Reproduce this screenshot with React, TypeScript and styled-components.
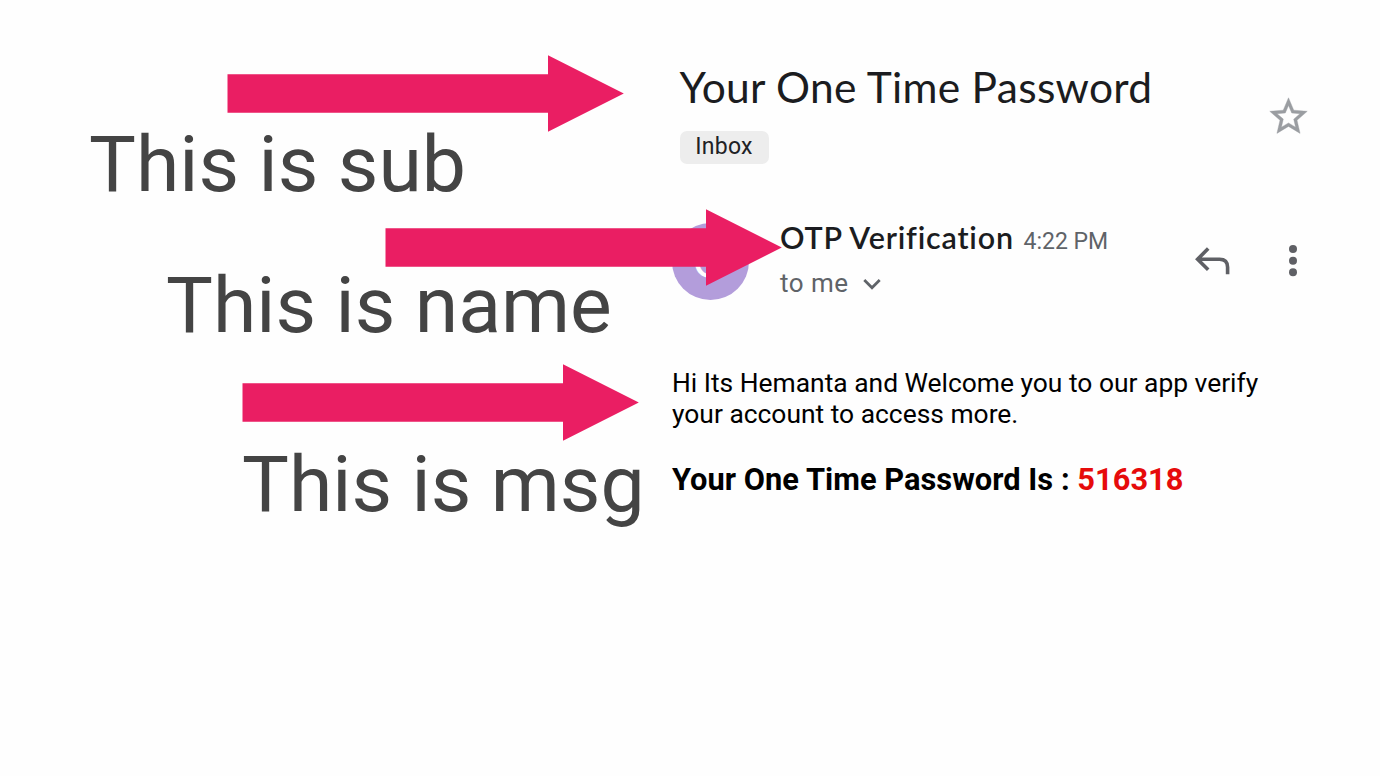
import React from 'react';
import styled, { createGlobalStyle } from 'styled-components';

const GlobalStyle = createGlobalStyle`
  * {
    box-sizing: border-box;
  }

  body {
    margin: 0;
    background: #fefefe;
    font-family: Roboto, 'Liberation Sans', sans-serif;
  }
`;

const Page = styled.div`
  display: flex;
  width: 1380px;
  height: 776px;
  overflow: hidden;
`;

const Notes = styled.aside`
  position: relative;
  z-index: 1;
  flex: 0 0 672px;
  min-width: 0;
  width: 672px;
  padding-top: 55px;
`;

const Note = styled.div<{ $indent: number; $space: number }>`
  display: flex;
  flex-direction: column;
  align-items: flex-start;
  padding-left: ${(p) => p.$indent}px;
  margin-bottom: ${(p) => p.$space}px;
`;

const ArrowShape = styled.svg<{ $shift: number }>`
  display: block;
  flex: none;
  margin-left: ${(p) => p.$shift}px;
  fill: #ea1e63;
`;

const NoteText = styled.div<{ $gap: number }>`
  margin-top: ${(p) => p.$gap}px;
  color: #444444;
  font-size: 78.7px;
  line-height: 38px;
  white-space: nowrap;
`;

const Mail = styled.main`
  flex: 1;
  min-width: 0;
  padding-top: 64px;
`;

const SubjectRow = styled.header`
  display: flex;
  justify-content: space-between;
  height: 158.5px;
  padding: 0 69px 0 7.5px;
`;

const Subject = styled.h1`
  margin: 0;
  color: #1b1c20;
  font-family: Lato, sans-serif;
  font-size: 42.5px;
  font-weight: 400;
  line-height: 46px;
  letter-spacing: 0.3px;
  white-space: nowrap;
`;

const Label = styled.span`
  display: block;
  width: 89px;
  height: 33px;
  margin-top: 20.5px;
  border-radius: 7px;
  background: #ededed;
  color: #202124;
  font-size: 23px;
  line-height: 32px;
  letter-spacing: 0.3px;
  text-align: center;
`;

const StarIcon = styled.svg`
  display: block;
  margin-top: 30px;
  fill: #9a9da1;
  stroke: #9a9da1;
  stroke-width: 0.2;
`;

const SenderRow = styled.section`
  display: flex;
  height: 145.5px;
`;

const Avatar = styled.div`
  width: 77px;
  height: 77px;
  border-radius: 50%;
  background: #b39ddb;
  color: #ffffff;
  font-family: Lato, sans-serif;
  font-size: 44px;
  line-height: 77px;
  text-align: center;
`;

const Sender = styled.div`
  width: 340px;
  margin-left: 31px;
`;

const NameLine = styled.div`
  display: flex;
  align-items: baseline;
  height: 36px;
  white-space: nowrap;
`;

const Name = styled.span`
  width: 243.5px;
  color: #1b1c20;
  font-family: Lato, sans-serif;
  font-size: 30.5px;
  font-weight: 600;
  line-height: 29px;
  letter-spacing: 0.8px;
`;

const Time = styled.span`
  color: #5f6368;
  font-size: 23px;
`;

const Recipient = styled.div`
  display: flex;
  align-items: center;
  gap: 14px;
  margin-top: 8.5px;
  color: #5f6368;
  font-size: 26px;
  line-height: 32px;
  letter-spacing: 0.5px;
`;

const ChevronIcon = styled.svg`
  margin-top: 2px;
`;

const Actions = styled.div`
  display: flex;
  align-items: flex-start;
  gap: 58.5px;
  padding: 22.5px 0 0 74.5px;
`;

const Message = styled.article`
  color: #000000;
`;

const Paragraph = styled.p`
  margin: 0;
  font-size: 26.4px;
  line-height: 31px;
  white-space: nowrap;
`;

const CodeLine = styled.p`
  margin: 32px 0 0;
  font-size: 30.8px;
  font-weight: 700;
  line-height: 36px;
  letter-spacing: 0.03px;
  white-space: nowrap;
`;

const Code = styled.span`
  color: #e60b0b;
`;

interface NoteItem {
  text: string;
  indent: number;
  shift: number;
  gap: number;
  space: number;
}

const notes: NoteItem[] = [
  { text: 'This is sub', indent: 89, shift: 138, gap: 13, space: 26 },
  { text: 'This is name', indent: 166, shift: 219, gap: 0, space: 40 },
  { text: 'This is msg', indent: 242, shift: 0, gap: 24, space: 0 },
];

const Arrow: React.FC<{ shift: number }> = ({ shift }) => (
  <ArrowShape $shift={shift} width="397" height="77" viewBox="0 0 397 77">
    <path d="M0.5 19.2H321V0.3L396.8 38.5L321 76.8V57.7H0.5Z" />
  </ArrowShape>
);

const App: React.FC = () => {
  return (
    <>
      <GlobalStyle />
      <Page>
        <Notes>
          {notes.map((note) => (
            <Note key={note.text} $indent={note.indent} $space={note.space}>
              <Arrow shift={note.shift} />
              <NoteText $gap={note.gap}>{note.text}</NoteText>
            </Note>
          ))}
        </Notes>
        <Mail>
          <SubjectRow>
            <div>
              <Subject>Your One Time Password</Subject>
              <Label>Inbox</Label>
            </div>
            <StarIcon width="45" height="45" viewBox="0 0 24 24">
              <path d="M22 9.24l-7.19-.62L12 2 9.19 8.63 2 9.24l5.46 4.73L5.82 21 12 17.27 18.18 21l-1.63-7.03L22 9.24zM12 15.4l-3.76 2.27 1-4.28-3.32-2.88 4.38-.38L12 6.1l1.71 4.04 4.38.38-3.32 2.88 1 4.28L12 15.4z" />
            </StarIcon>
          </SubjectRow>
          <SenderRow>
            <Avatar>O</Avatar>
            <Sender>
              <NameLine>
                <Name>OTP Verification</Name>
                <Time>4:22 PM</Time>
              </NameLine>
              <Recipient>
                to me
                <ChevronIcon width="18" height="12" viewBox="0 0 18 12" fill="none" stroke="#5f6368" strokeWidth="2.8">
                  <path d="M1.3 2L9 9.7L16.7 2" />
                </ChevronIcon>
              </Recipient>
            </Sender>
            <Actions>
              <svg width="36" height="32" viewBox="0 0 36 32" fill="none" stroke="#5f6065" strokeWidth="3.6">
                <path d="M13.2 3.6L2.6 14.2L13.2 24.8M3 14.2H24.5Q32.6 14.2 32.6 22.3V29.2" />
              </svg>
              <svg width="8" height="32" viewBox="0 0 8 32" fill="#5f6065">
                <circle cx="4" cy="4.1" r="4" />
                <circle cx="4" cy="15.7" r="4" />
                <circle cx="4" cy="27.2" r="4" />
              </svg>
            </Actions>
          </SenderRow>
          <Message>
            <Paragraph>
              Hi Its Hemanta and Welcome you to our app verify
              <br />
              your account to access more.
            </Paragraph>
            <CodeLine>
              Your One Time Password Is : <Code>516318</Code>
            </CodeLine>
          </Message>
        </Mail>
      </Page>
    </>
  );
};

export default App;
